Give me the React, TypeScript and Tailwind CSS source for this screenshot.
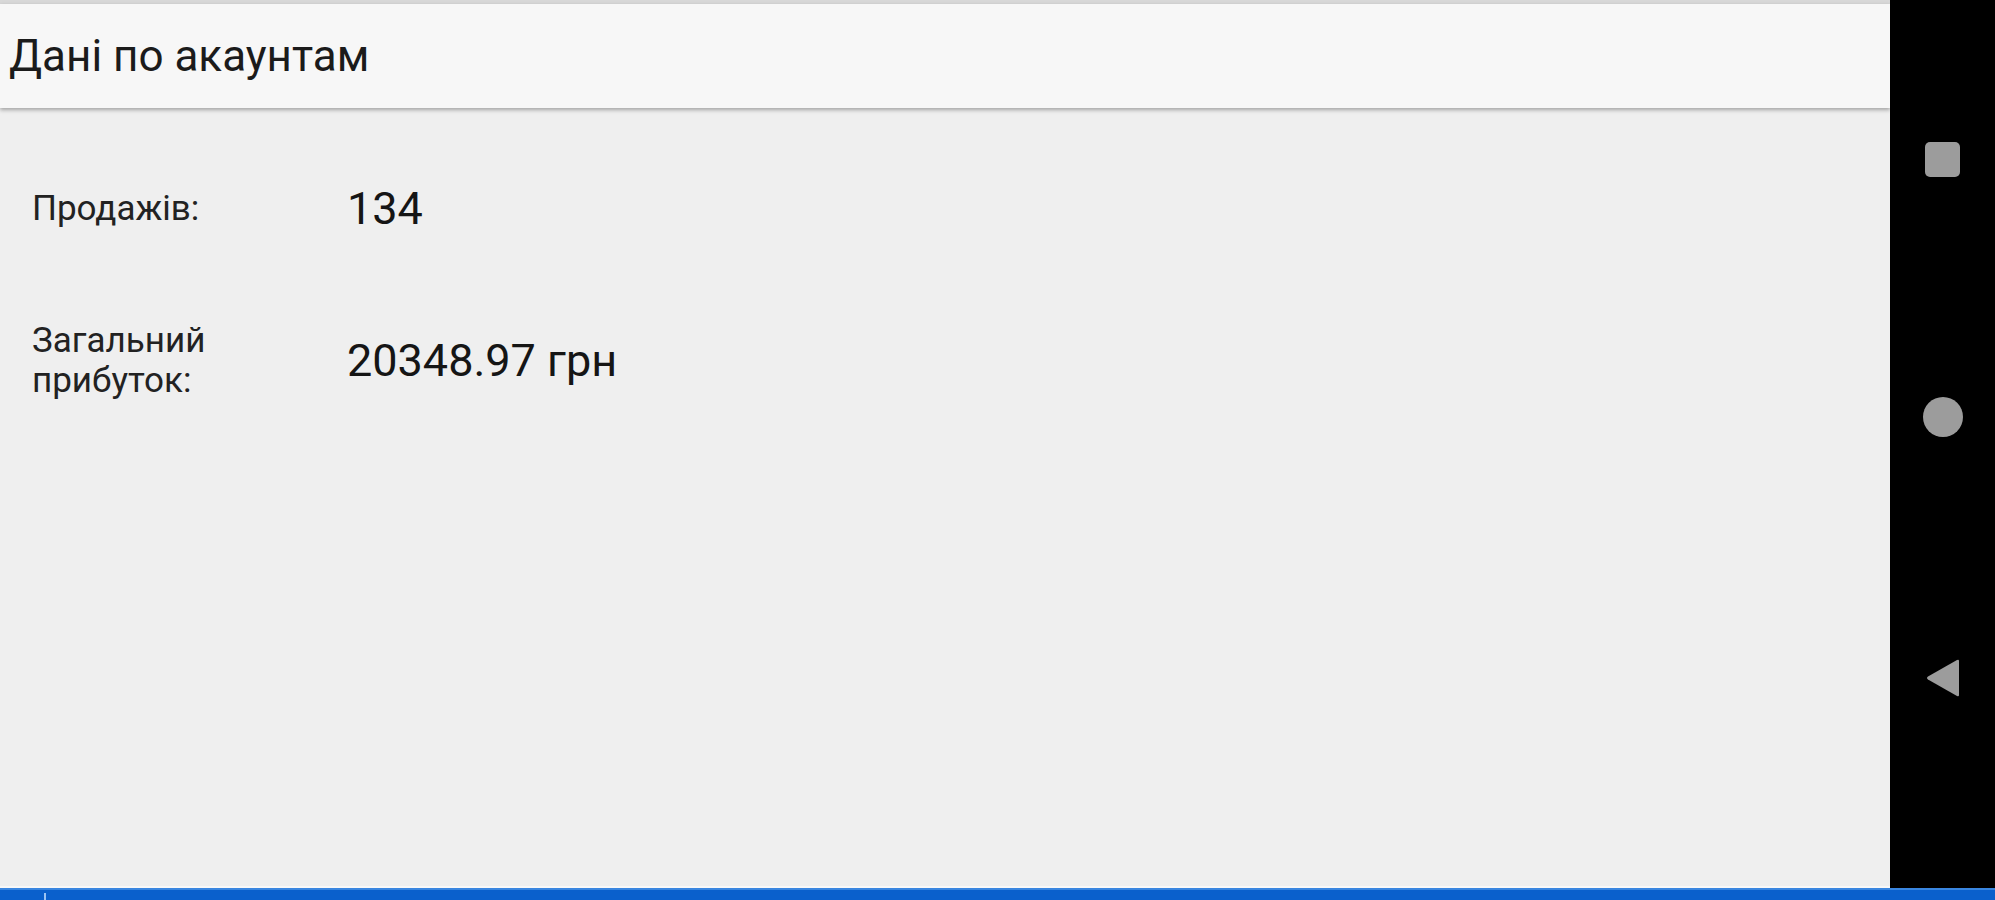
const rows: { label: string; value: string }[] = [
  { label: 'Продажів:', value: '134' },
  { label: 'Загальний прибуток:', value: '20348.97 грн' },
]

function NavBar() {
  return (
    <div className="flex w-[105px] flex-col items-center bg-black pt-[142px]">
      <div className="h-[35px] w-[35px] rounded-[5px] bg-[#9c9c9c]" />
      <div className="mt-[220px] h-[40px] w-[40px] rounded-full bg-[#9c9c9c]" />
      <svg className="mt-[222px]" width="36" height="38" viewBox="0 0 36 38">
        <path d="M34 2 L34 36 Q34 38 32 37 L3 20.5 Q1 19 3 17.5 L32 1 Q34 0 34 2 Z" fill="#9c9c9c" />
      </svg>
    </div>
  )
}

export default function App() {
  return (
    <div className="flex h-[900px] w-[1995px] flex-col overflow-hidden bg-black font-['Roboto',sans-serif]">
      <div className="flex flex-1">
        <div className="flex flex-1 flex-col bg-[#efefef]">
          <div className="h-[4px] bg-[#d8d8d8]" />
          <header className="relative z-10 flex h-[104px] items-center bg-[#f7f7f7] pl-[9px] shadow-[0_2px_4px_rgba(0,0,0,0.32)]">
            <h1 className="text-[44px] leading-none font-normal text-[#1b1b1b]">Дані по акаунтам</h1>
          </header>
          <div className="flex flex-1 flex-col px-[32px] pt-[71px]">
            {rows.map((r, i) => (
              <div key={r.label} className={`flex items-center ${i === 0 ? 'h-[60px]' : 'mt-[82px] h-[80px]'}`}>
                <span className="w-[230px] text-[35px] leading-[40px] text-[#222]">{r.label}</span>
                <span className="ml-[85px] text-[45px] leading-[52px] text-[#151515]">{r.value}</span>
              </div>
            ))}
          </div>
          <div className="h-[2px] bg-[#f8f8f8]" />
        </div>
        <NavBar />
      </div>
      <div className="relative h-[12px] border-t-2 border-[#3a86e0] bg-[#0a60cc]">
        <div className="absolute top-[3px] left-[44px] h-[8px] w-[2px] bg-[#9cc4f2]" />
      </div>
    </div>
  )
}
